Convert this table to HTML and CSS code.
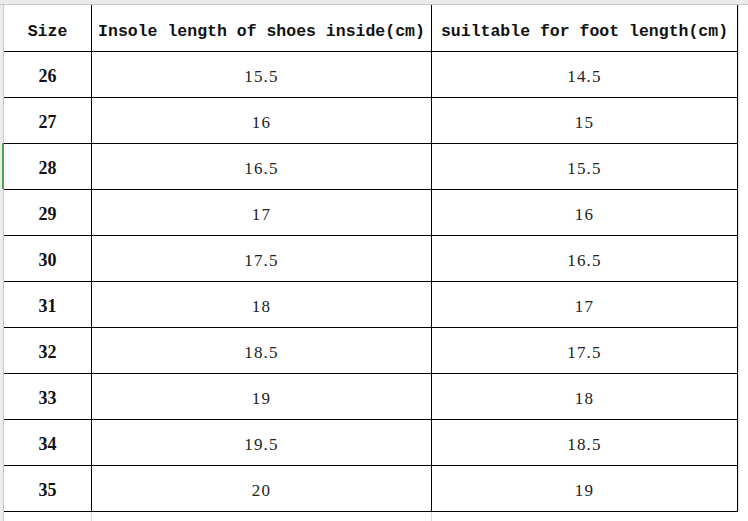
FILE: index.html
```html
<!DOCTYPE html>
<html>
<head>
<meta charset="utf-8">
<link rel="stylesheet" href="styles.css">
</head>
<body>
<div class="top-strip"></div>
<div class="main">
  <div class="left-strip"><span class="sel-mark"></span></div>
  <div class="content">
    <div class="grid">
      <div class="cell head">Size</div>
      <div class="cell head">Insole length of shoes inside(cm)</div>
      <div class="cell head">suiltable for foot length(cm)</div>

      <div class="cell size">26</div><div class="cell num">15.5</div><div class="cell num">14.5</div>
      <div class="cell size">27</div><div class="cell num">16</div><div class="cell num">15</div>
      <div class="cell size">28</div><div class="cell num">16.5</div><div class="cell num">15.5</div>
      <div class="cell size">29</div><div class="cell num">17</div><div class="cell num">16</div>
      <div class="cell size">30</div><div class="cell num">17.5</div><div class="cell num">16.5</div>
      <div class="cell size">31</div><div class="cell num">18</div><div class="cell num">17</div>
      <div class="cell size">32</div><div class="cell num">18.5</div><div class="cell num">17.5</div>
      <div class="cell size">33</div><div class="cell num">19</div><div class="cell num">18</div>
      <div class="cell size">34</div><div class="cell num">19.5</div><div class="cell num">18.5</div>
      <div class="cell size">35</div><div class="cell num">20</div><div class="cell num">19</div>
    </div>
    <div class="tail">
      <div class="tail-cell c1"></div>
      <div class="tail-cell c2"></div>
      <div class="tail-cell c3"></div>
    </div>
  </div>
</div>
</body>
</html>
```

FILE: styles.css
```css
html, body {
  margin: 0;
  padding: 0;
  background: #ffffff;
  overflow: hidden;
}
body {
  width: 748px;
  height: 521px;
  font-family: "Liberation Serif", serif;
  color: #1a1a1a;
}
.top-strip {
  height: 4px;
  background: #ececec;
  border-bottom: 1px solid #c9c9c9;
}
.main {
  display: flex;
  height: 516px;
}
.left-strip {
  position: relative;
  width: 3px;
  background: #ececec;
  border-right: 1px solid #c9c9c9;
}
.sel-mark {
  position: absolute;
  left: 2px;
  top: 138px;
  width: 2px;
  height: 46px;
  background: #4ca64c;
}
.content {
  display: flex;
  flex-direction: column;
}
.grid {
  display: grid;
  grid-template-columns: 88px 340px 306px;
  grid-template-rows: 47px repeat(10, 46px);
  border-right: 1px solid #e0e0e0;
  width: 734px;
}
.cell {
  display: flex;
  align-items: center;
  justify-content: center;
  border-right: 1px solid #000;
  border-bottom: 1px solid #000;
  padding-top: 4px;
  box-sizing: border-box;
}
.head {
  font-family: "Liberation Mono", monospace;
  font-weight: bold;
  font-size: 16.5px;
  color: #111;
  padding-top: 6px;
}
.size {
  font-weight: bold;
  font-size: 18px;
  color: #111;
}
.num {
  font-size: 17px;
  letter-spacing: 1.2px;
  color: #222;
}
.tail {
  display: flex;
  height: 10px;
}
.tail-cell {
  border-right: 1px solid #dcdcdc;
  box-sizing: border-box;
}
.c1 { width: 88px; }
.c2 { width: 340px; }
.c3 { width: 306px; border-right: none; }
```
